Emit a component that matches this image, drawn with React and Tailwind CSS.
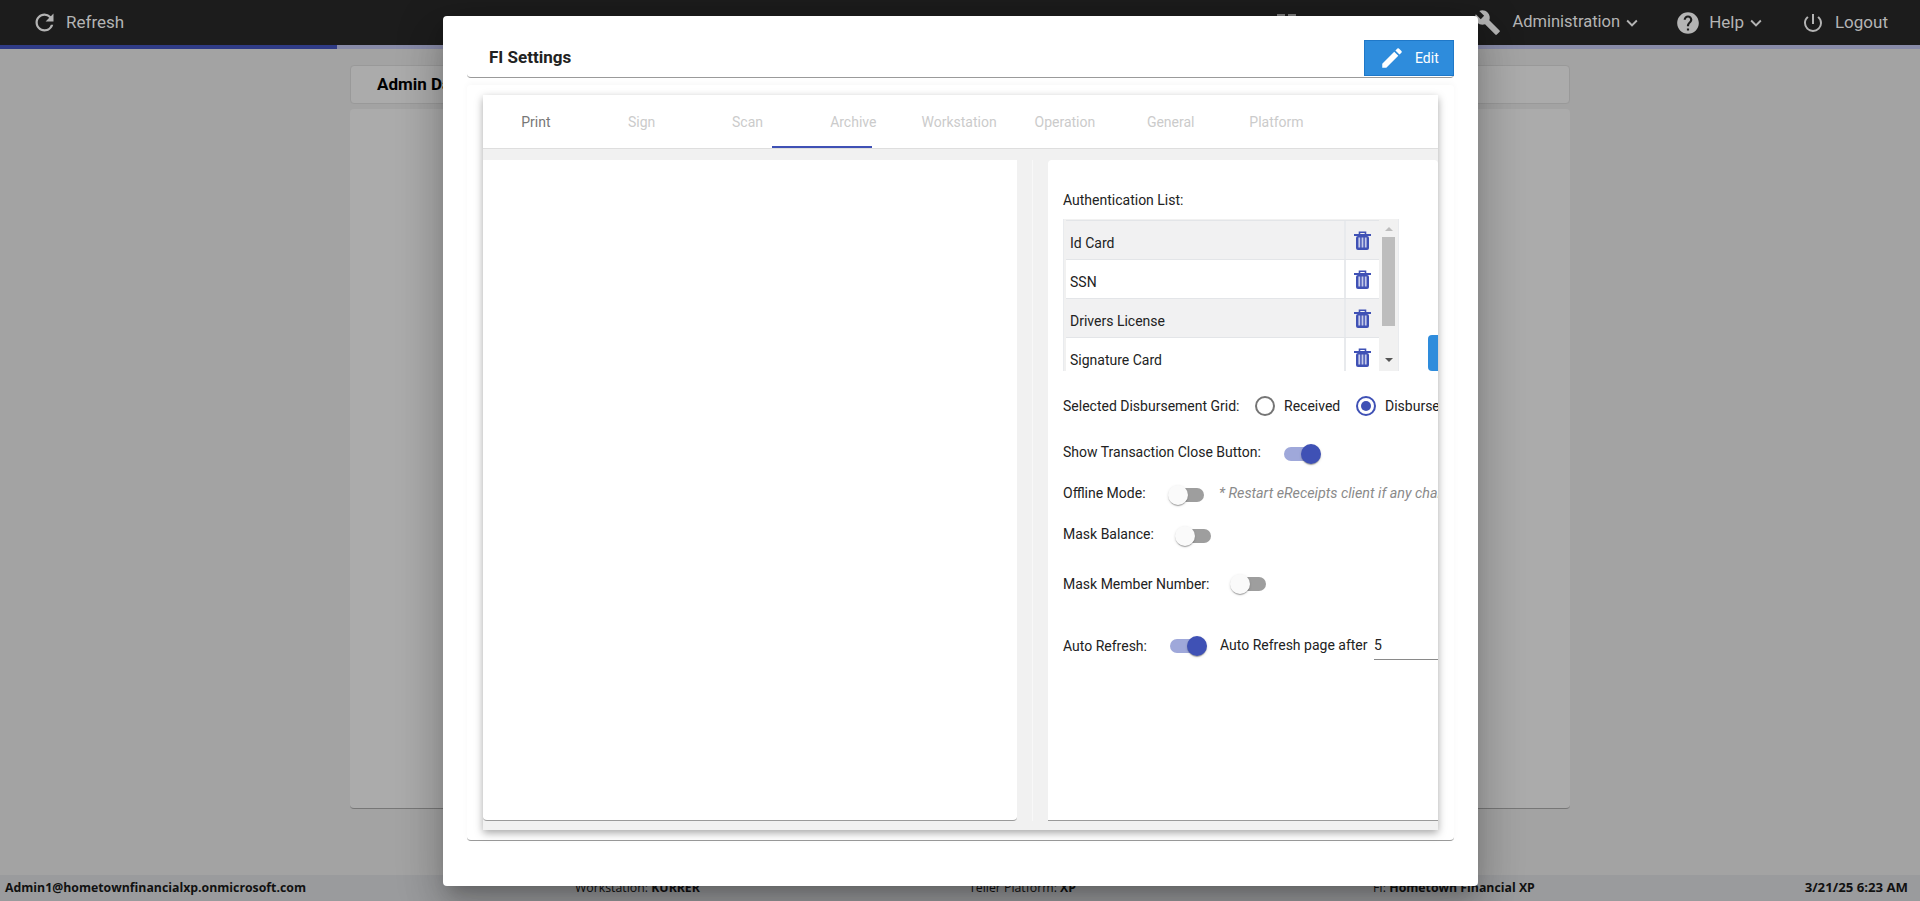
import { MdRefresh, MdBuild, MdHelp, MdPowerSettingsNew, MdEdit, MdKeyboardArrowDown } from 'react-icons/md'

const tabs = ['Print', 'Sign', 'Scan', 'Archive', 'Workstation', 'Operation', 'General', 'Platform']
const authItems = ['Id Card', 'SSN', 'Drivers License', 'Signature Card']

function NavItem({ icon, label, caret, className = '', labelClass = '' }) {
  return (
    <div className={`flex items-center text-[17px] text-[#b4b4b4] ${className}`}>
      {icon}
      <span className={labelClass}>{label}</span>
      {caret && <MdKeyboardArrowDown className="ml-[1px] text-[22px]" />}
    </div>
  )
}

function TrashIcon() {
  return (
    <svg width="17" height="19" viewBox="0 0 17 19" className="text-[#3f51b5]">
      <path d="M5.5 3V1.2h6V3" fill="none" stroke="currentColor" strokeWidth="1.6" />
      <rect x="0" y="3" width="17" height="2" fill="currentColor" />
      <rect x="2" y="5" width="13" height="14" rx="2" fill="currentColor" />
      <rect x="4.4" y="6.5" width="1.8" height="10" fill="#c5cae9" />
      <rect x="7.6" y="6.5" width="1.8" height="10" fill="#c5cae9" />
      <rect x="10.8" y="6.5" width="1.8" height="10" fill="#c5cae9" />
    </svg>
  )
}

function Toggle({ on }) {
  return (
    <div className={`relative h-[14px] w-[34px] shrink-0 rounded-full ${on ? 'bg-[#9fa8da]' : 'bg-[#9e9e9e]'}`}>
      <div
        className={`absolute top-[-3px] h-5 w-5 rounded-full shadow-[0_2px_1px_-1px_rgba(0,0,0,.2),0_1px_1px_rgba(0,0,0,.14),0_1px_3px_rgba(0,0,0,.12)] ${on ? 'right-[-3px] bg-[#3f51b5]' : 'left-[-2px] bg-[#fafafa]'}`}
      />
    </div>
  )
}

function Radio({ checked }) {
  return (
    <div className={`flex h-5 w-5 shrink-0 items-center justify-center rounded-full border-2 ${checked ? 'border-[#3f51b5]' : 'border-[#757575]'}`}>
      {checked && <div className="h-[10px] w-[10px] rounded-full bg-[#3f51b5]" />}
    </div>
  )
}

function AuthList() {
  return (
    <div className="flex h-[152px] w-[336px] shrink-0 border-x border-[#e9ebee] bg-[#f1f1f1] pl-[2px] pt-[1px]">
      <div className="h-[151px] flex-1 overflow-hidden border-t border-[#e3e5e8]">
        {authItems.map((item, i) => (
          <div key={item} className={`flex h-[39px] border-b border-[#e3e5e8] ${i % 2 === 0 ? 'bg-[#f1f1f2]' : 'bg-white'}`}>
            <div className="flex flex-1 items-center border-r-2 border-[#e8eaed] pl-[4px] pt-[5px]">{item}</div>
            <div className="flex w-[33px] items-center justify-center">
              <TrashIcon />
            </div>
          </div>
        ))}
      </div>
      <div className="flex w-[19px] shrink-0 flex-col items-center">
        <div className="mt-[7px] h-0 w-0 border-x-4 border-b-4 border-x-transparent border-b-[#bdbdbd]" />
        <div className="mt-[6px] h-[89px] w-[13px] bg-[#bdbdbd]" />
        <div className="mt-[32px] h-0 w-0 border-x-4 border-t-4 border-x-transparent border-t-[#555]" />
      </div>
    </div>
  )
}

function SettingsCard() {
  return (
    <div className="ml-[15px] w-[390px] shrink-0 overflow-hidden rounded-t border-b border-[#9a9a9a] bg-white pl-[15px] text-[14px] leading-5 whitespace-nowrap text-[#222]">
      <div className="mt-[30px] h-5">Authentication List:</div>

      <div className="mt-[9px] flex items-end">
        <AuthList />
        <div className="ml-[29px] h-[36px] w-[30px] shrink-0 rounded-l bg-[#2e8cdc]" />
      </div>

      <div className="mt-[25px] flex h-5 items-center">
        <span className="w-[192px] shrink-0">Selected Disbursement Grid:</span>
        <Radio />
        <span className="ml-[9px] w-[72px] shrink-0">Received</span>
        <Radio checked />
        <span className="ml-[9px] shrink-0">Disbursed</span>
      </div>

      <div className="mt-[28px] flex h-5 items-center">
        <span className="relative top-[-2px] w-[221px] shrink-0">Show Transaction Close Button:</span>
        <Toggle on />
      </div>

      <div className="mt-[21px] flex h-5 items-center">
        <span className="relative top-[-2px] w-[107px] shrink-0">Offline Mode:</span>
        <Toggle />
        <span className="relative top-[-2px] ml-[15px] shrink-0 text-[14.3px] text-[#8a8a8a] italic">* Restart eReceipts client if any changes</span>
      </div>

      <div className="mt-[21px] flex h-5 items-center">
        <span className="relative top-[-2px] w-[114px] shrink-0">Mask Balance:</span>
        <Toggle />
      </div>

      <div className="mt-[28px] flex h-5 items-center">
        <span className="w-[169px] shrink-0">Mask Member Number:</span>
        <Toggle />
      </div>

      <div className="mt-[42px] flex h-5 items-center">
        <span className="w-[107px] shrink-0">Auto Refresh:</span>
        <Toggle on />
        <span className="relative top-[-1px] ml-[16px] w-[154px] shrink-0">Auto Refresh page after</span>
        <div className="h-7 w-[120px] shrink-0 border-b border-[#8a8a8a] pt-[3px]">5</div>
      </div>
    </div>
  )
}

function SettingsDialog() {
  return (
    <div className="absolute top-4 left-[443px] z-10 h-[870px] w-[1035px] rounded bg-white px-6 pt-6 font-['Roboto',sans-serif] shadow-[0_11px_15px_-7px_rgba(0,0,0,.2),0_24px_38px_3px_rgba(0,0,0,.14),0_9px_46px_8px_rgba(0,0,0,.12)]">
      <div className="flex h-[38px] items-start justify-between rounded border-b border-[#9a9a9a] bg-white">
        <div className="pt-[7px] pl-[22px] text-[17px] leading-5 font-bold text-[#222]">FI Settings</div>
        <div className="flex h-9 w-[90px] items-center border border-[#1f78c8] bg-[#2e8cdc] pl-[14px] text-[14px] text-white">
          <MdEdit className="text-[26px]" />
          <span className="ml-[10px]">Edit</span>
        </div>
      </div>

      <div className="mt-[7px] h-[756px] rounded border-b border-[#9a9a9a] bg-white px-4 pt-[10px] shadow-[0_-2px_6px_rgba(0,0,0,.03)]">
        <div className="flex h-[735px] flex-col shadow-[0_3px_8px_rgba(0,0,0,.35)]">
          <div className="relative flex h-[54px] shrink-0 border-b border-[#dedede] bg-white">
            {tabs.map((t, i) => (
              <div key={t} className={`flex w-[105.8px] items-center justify-center pt-[1px] text-[14px] ${i === 0 ? 'text-[#777]' : 'text-[#cbcbcb]'}`}>
                {t}
              </div>
            ))}
            <div className="absolute bottom-0 left-[289px] h-[2px] w-[100px] bg-[#3f51b5]" />
          </div>

          <div className="flex flex-1 bg-[#f1f1f1] pt-[11px] pb-[9px]">
            <div className="w-[534px] shrink-0 rounded-b border-b border-[#9a9a9a] bg-white" />
            <div className="ml-[15px] w-px shrink-0 bg-[#f8f8f8]" />
            <SettingsCard />
          </div>
        </div>
      </div>
    </div>
  )
}

export default function App() {
  return (
    <div className="relative flex h-screen w-full flex-col overflow-hidden bg-[#a3a3a3] font-['Roboto',sans-serif]">
      <header className="flex h-[45px] shrink-0 items-center bg-[#1c1c1c] pr-[32px]">
        <NavItem className="ml-[31px]" icon={<MdRefresh className="mr-[8px] text-[27px]" />} label="Refresh" />
        <div className="mt-[14px] ml-auto h-[3px] w-[19px] self-start border-x-[8px] border-[#777]" />
        <NavItem className="ml-[178px]" icon={<MdBuild className="mr-[11px] text-[27px]" />} label="Administration" labelClass="text-[16.5px]" caret />
        <NavItem className="ml-[32px]" icon={<MdHelp className="mr-[8px] text-[26px]" />} label="Help" caret />
        <NavItem className="ml-[34px]" icon={<MdPowerSettingsNew className="mr-[10px] text-[24px]" />} label="Logout" />
      </header>

      <div className="flex h-1 shrink-0 bg-[#888ba8]">
        <div className="w-[337px] bg-[#2f3b86]" />
      </div>

      <main className="min-h-0 flex-1 px-[350px] pt-4">
        <div className="flex h-[39px] items-center rounded border border-[#999] bg-[#ababab] pl-[26px] text-[17px] font-bold text-black">Admin Dashboard</div>
        <div className="mt-[5px] h-[700px] rounded border-b border-[#777] bg-[#ababab]" />
      </main>

      <footer className="flex h-[26px] shrink-0 items-center bg-[#9a9b9d] pl-[5px] pr-3 font-['Open_Sans',sans-serif] text-[12.3px] text-[#111]">
        <div className="w-[570px] font-bold">Admin1@hometownfinancialxp.onmicrosoft.com</div>
        <div className="w-[394px]">Workstation: <b>KURRER</b></div>
        <div className="w-[404px]">Teller Platform: <b>XP</b></div>
        <div>FI: <b>Hometown Financial XP</b></div>
        <div className="ml-auto text-[13.2px] font-bold">3/21/25 6:23 AM</div>
      </footer>

      <SettingsDialog />
    </div>
  )
}
